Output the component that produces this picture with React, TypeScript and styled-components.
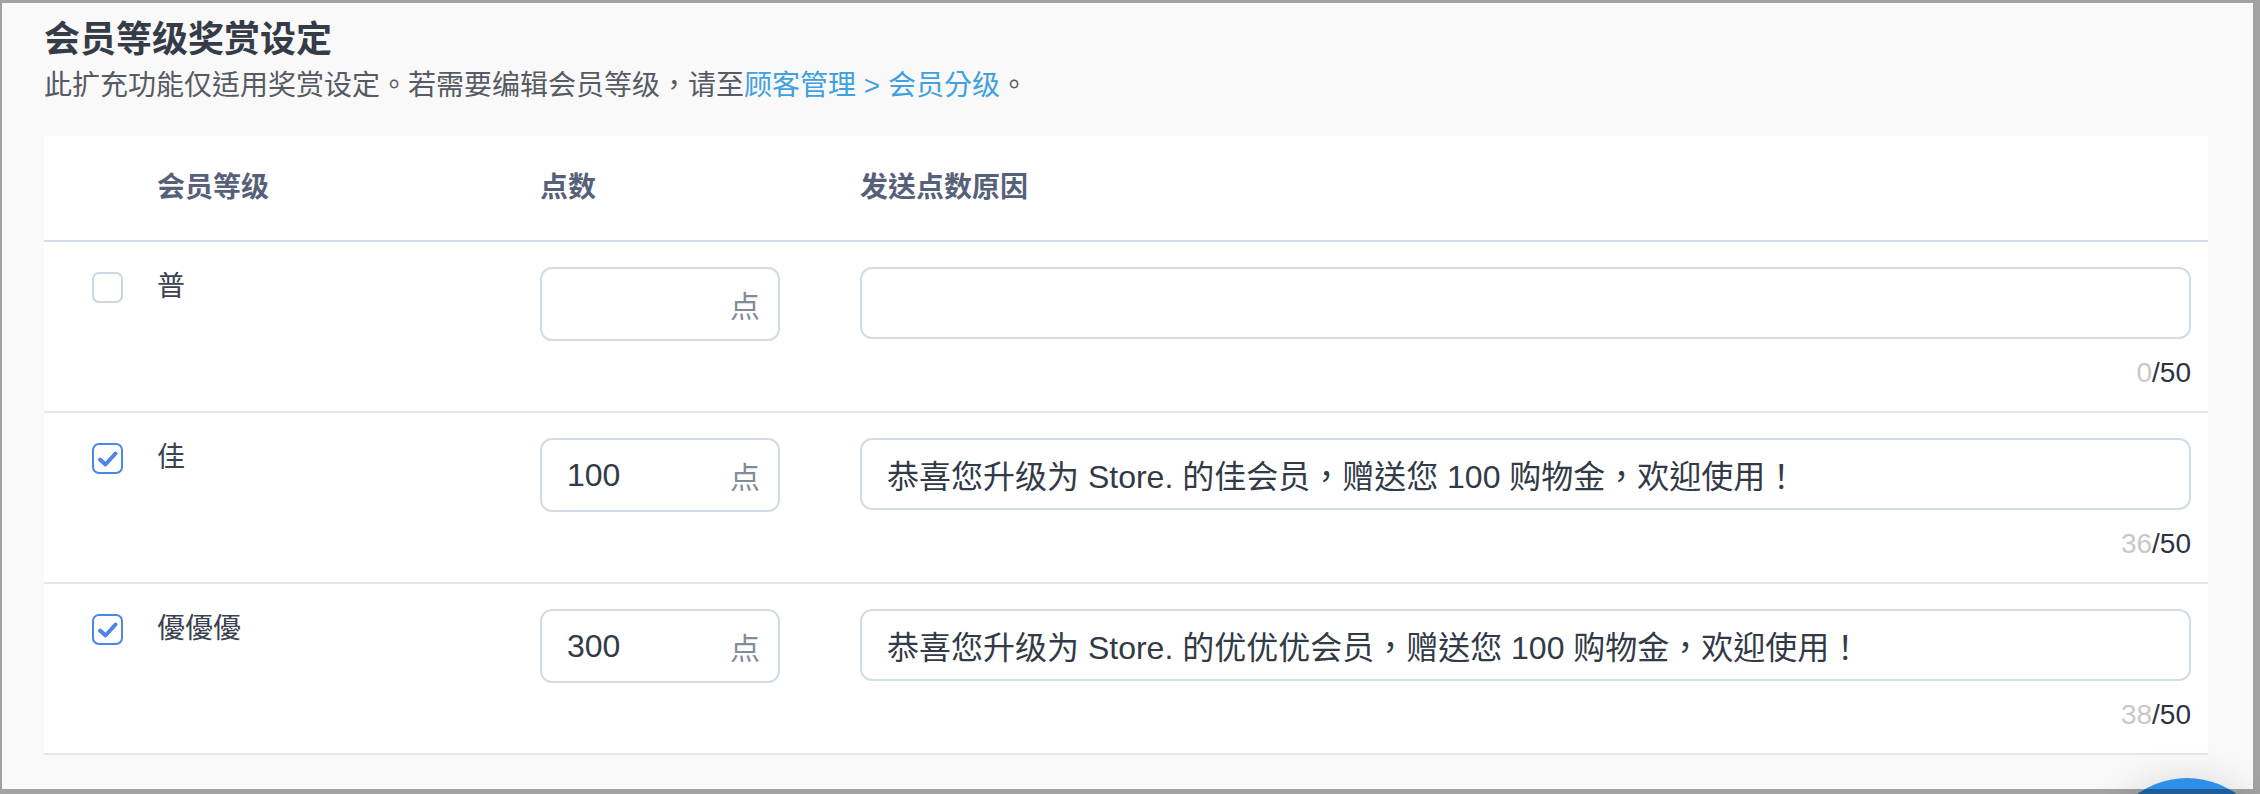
import React from "react";
import styled, { createGlobalStyle } from "styled-components";

const GlobalStyle = createGlobalStyle`
  html, body {
    margin: 0;
    padding: 0;
    background: #f9f9f9;
    overflow: hidden;
  }
  body {
    font-family: "Liberation Sans", "Noto Sans CJK TC", sans-serif;
    color: #333a47;
  }
  * { box-sizing: border-box; }
`;

const Page = styled.div`
  padding: 16px 52px 0 44px;
  min-height: 794px;
`;

const Title = styled.h1`
  margin: 0;
  font-size: 36px;
  line-height: 48px;
  font-weight: 700;
  color: #353c48;
`;

const Subtitle = styled.p`
  margin: 2px 0 0;
  font-size: 28px;
  line-height: 40px;
  color: #565b63;
`;

const Link = styled.a`
  color: #40a0e0;
  text-decoration: none;
`;

const Panel = styled.div`
  margin-top: 30px;
  background: #ffffff;
`;

const GridRow = styled.div<{ $header?: boolean }>`
  display: grid;
  grid-template-columns: 65px 383px 320px 1fr;
  padding: ${(p) => (p.$header ? "0 17px 0 48px" : "25px 17px 18px 48px")};
  align-items: ${(p) => (p.$header ? "center" : "start")};
  height: ${(p) => (p.$header ? "106px" : "auto")};
  border-bottom: 2px solid ${(p) => (p.$header ? "#d3dde7" : "#e3e8ee")};
`;

const HeadCell = styled.div`
  font-size: 28px;
  line-height: 40px;
  font-weight: 700;
  color: #566079;
`;

const CheckBox = styled.span<{ $checked?: boolean }>`
  display: flex;
  align-items: center;
  justify-content: center;
  width: 31px;
  height: 31px;
  margin-top: 5px;
  border-radius: 7px;
  border: 2px solid ${(p) => (p.$checked ? "#4a86e8" : "#cbd7e3")};
  background: #ffffff;
`;

const Name = styled.div`
  font-size: 28px;
  line-height: 40px;
  color: #3a4150;
`;

const PointsField = styled.label`
  display: flex;
  align-items: center;
  width: 240px;
  height: 74px;
  padding: 0 18px 0 25px;
  border: 2px solid #d1dce6;
  border-radius: 12px;
  background: #ffffff;
`;

const BareInput = styled.input`
  flex: 1;
  min-width: 0;
  border: none;
  outline: none;
  background: transparent;
  padding: 0;
  font-family: inherit;
  font-size: 32px;
  color: #333a47;
`;

const Suffix = styled.span`
  font-size: 30px;
  color: #838b9b;
`;

const ReasonCell = styled.div`
  display: flex;
  flex-direction: column;
`;

const ReasonField = styled.div`
  display: flex;
  align-items: center;
  height: 72px;
  padding: 0 24px 0 25px;
  border: 2px solid #d1dce6;
  border-radius: 12px;
  background: #ffffff;
`;

const Counter = styled.div`
  margin-top: 14px;
  text-align: right;
  font-size: 28px;
  line-height: 40px;
  color: #2d3340;
`;

const CountUsed = styled.span`
  color: #c8c8c8;
`;

const FloatButton = styled.div`
  position: fixed;
  left: 2102px;
  top: 778px;
  width: 170px;
  height: 170px;
  border-radius: 50%;
  background: #2f8fe9;
  box-shadow: 0 2px 40px rgba(0, 0, 0, 0.14);
`;

const Frame = styled.div`
  position: fixed;
  inset: 0;
  pointer-events: none;
  border-style: solid;
  border-color: rgba(0, 0, 0, 0.35);
  border-width: 3px 7px 5px 2px;
`;

type Tier = {
  name: string;
  checked: boolean;
  points: string;
  reason: string;
};

const tiers: Tier[] = [
  { name: "普", checked: false, points: "", reason: "" },
  {
    name: "佳",
    checked: true,
    points: "100",
    reason: "恭喜您升级为 Store. 的佳会员，赠送您 100 购物金，欢迎使用！",
  },
  {
    name: "優優優",
    checked: true,
    points: "300",
    reason: "恭喜您升级为 Store. 的优优优会员，赠送您 100 购物金，欢迎使用！",
  },
];

const CheckIcon = () => (
  <svg width="24" height="24" viewBox="0 0 24 24" fill="none">
    <path
      d="M4 12.5 L9.5 17.5 L19.5 6.5"
      stroke="#4a86e8"
      strokeWidth="4"
      strokeLinecap="round"
      strokeLinejoin="round"
    />
  </svg>
);

export default function App() {
  return (
    <>
      <GlobalStyle />
      <Page>
        <Title>会员等级奖赏设定</Title>
        <Subtitle>
          此扩充功能仅适用奖赏设定。若需要编辑会员等级，请至
          <Link href="#">顾客管理 &gt; 会员分级</Link>。
        </Subtitle>
        <Panel>
          <GridRow $header>
            <div />
            <HeadCell>会员等级</HeadCell>
            <HeadCell>点数</HeadCell>
            <HeadCell>发送点数原因</HeadCell>
          </GridRow>
          {tiers.map((t) => (
            <GridRow key={t.name}>
              <CheckBox $checked={t.checked}>{t.checked && <CheckIcon />}</CheckBox>
              <Name>{t.name}</Name>
              <div>
                <PointsField>
                  <BareInput value={t.points} readOnly />
                  <Suffix>点</Suffix>
                </PointsField>
              </div>
              <ReasonCell>
                <ReasonField>
                  <BareInput value={t.reason} readOnly />
                </ReasonField>
                <Counter>
                  <CountUsed>{t.reason.length}</CountUsed>/50
                </Counter>
              </ReasonCell>
            </GridRow>
          ))}
        </Panel>
      </Page>
      <FloatButton />
      <Frame />
    </>
  );
}
